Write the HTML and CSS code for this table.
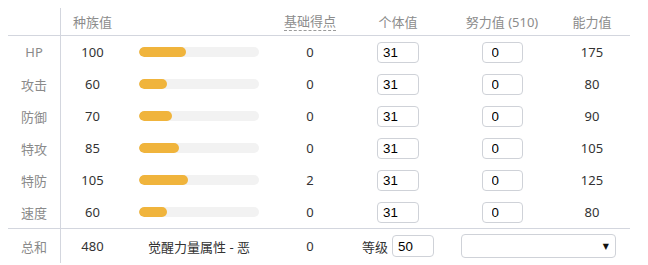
FILE: index.html
```html
<!DOCTYPE html>
<html lang="zh">
<head>
<meta charset="utf-8">
<link rel="stylesheet" href="styles.css">
</head>
<body>
<div class="stats">
  <div class="row head">
    <div class="cell label"></div>
    <div class="cell">种族值</div>
    <div class="cell"></div>
    <div class="cell"><span class="abbr">基础得点</span></div>
    <div class="cell">个体值</div>
    <div class="cell">努力值 (510)</div>
    <div class="cell">能力值</div>
  </div>

  <div class="row">
    <div class="cell label">HP</div>
    <div class="cell val">100</div>
    <div class="cell barcell"><div class="bar"><div class="fill" style="width:47px"></div></div></div>
    <div class="cell val">0</div>
    <div class="cell"><input class="inp iv" value="31"></div>
    <div class="cell"><input class="inp ev" value="0"></div>
    <div class="cell val">175</div>
  </div>
  <div class="row">
    <div class="cell label">攻击</div>
    <div class="cell val">60</div>
    <div class="cell barcell"><div class="bar"><div class="fill" style="width:28px"></div></div></div>
    <div class="cell val">0</div>
    <div class="cell"><input class="inp iv" value="31"></div>
    <div class="cell"><input class="inp ev" value="0"></div>
    <div class="cell val">80</div>
  </div>
  <div class="row">
    <div class="cell label">防御</div>
    <div class="cell val">70</div>
    <div class="cell barcell"><div class="bar"><div class="fill" style="width:33px"></div></div></div>
    <div class="cell val">0</div>
    <div class="cell"><input class="inp iv" value="31"></div>
    <div class="cell"><input class="inp ev" value="0"></div>
    <div class="cell val">90</div>
  </div>
  <div class="row">
    <div class="cell label">特攻</div>
    <div class="cell val">85</div>
    <div class="cell barcell"><div class="bar"><div class="fill" style="width:40px"></div></div></div>
    <div class="cell val">0</div>
    <div class="cell"><input class="inp iv" value="31"></div>
    <div class="cell"><input class="inp ev" value="0"></div>
    <div class="cell val">105</div>
  </div>
  <div class="row">
    <div class="cell label">特防</div>
    <div class="cell val">105</div>
    <div class="cell barcell"><div class="bar"><div class="fill" style="width:49px"></div></div></div>
    <div class="cell val">2</div>
    <div class="cell"><input class="inp iv" value="31"></div>
    <div class="cell"><input class="inp ev" value="0"></div>
    <div class="cell val">125</div>
  </div>
  <div class="row">
    <div class="cell label">速度</div>
    <div class="cell val">60</div>
    <div class="cell barcell"><div class="bar"><div class="fill" style="width:28px"></div></div></div>
    <div class="cell val">0</div>
    <div class="cell"><input class="inp iv" value="31"></div>
    <div class="cell"><input class="inp ev" value="0"></div>
    <div class="cell val">80</div>
  </div>

  <div class="row total">
    <div class="cell label">总和</div>
    <div class="cell val">480</div>
    <div class="cell val">觉醒力量属性 - 恶</div>
    <div class="cell val">0</div>
    <div class="cell level"><span class="lvl-label">等级</span><input class="inp lvl" value="50"></div>
    <div class="cell span2"><div class="select"><span class="arrow">▼</span></div></div>
  </div>
</div>
</body>
</html>
```

FILE: styles.css
```css
* { box-sizing: border-box; }

body {
  margin: 8px;
  background: #ffffff;
  font-family: "Noto Sans", "Noto Sans CJK SC", sans-serif;
  font-size: 13px;
  color: #333333;
}

.stats {
  width: 622px;
}

.row {
  display: grid;
  grid-template-columns: 53px 63px 150px 72px 104px 104px 76px;
  height: 32px;
}

.row.head {
  height: 28px;
  border-bottom: 1px solid #d3d6de;
  color: #8c8c8c;
}

.row.total {
  height: 35px;
  border-top: 1px solid #d3d6de;
}

.cell {
  display: flex;
  align-items: center;
  justify-content: center;
  white-space: nowrap;
}

.cell.label {
  border-right: 1px solid #d3d6de;
  color: #8a8a8a;
}

.val {
  color: #333333;
}

.abbr {
  display: inline-block;
  line-height: 17px;
  border-bottom: 1px dashed #9a9a9a;
}

.barcell {
  justify-content: flex-start;
  padding-left: 15px;
}

.bar {
  width: 120px;
  height: 10px;
  border-radius: 5px;
  background: #f2f2f2;
  overflow: hidden;
}

.fill {
  height: 10px;
  border-radius: 5px;
  background: #f0b43c;
}

.inp {
  width: 42px;
  height: 21px;
  border: 1px solid #cfd2d8;
  border-radius: 4px;
  padding: 0 0 0 5px;
  font-family: "Liberation Sans", Arial, sans-serif;
  font-size: 13.33px;
  color: #000000;
  background: #ffffff;
  outline: none;
}

.inp.ev {
  width: 41px;
  padding-left: 9px;
}

.level {
  gap: 4px;
}

.lvl-label {
  color: #333333;
}

.inp.lvl {
  height: 22px;
}

.span2 {
  grid-column: span 2;
  justify-content: flex-start;
  padding-left: 11px;
}

.select {
  width: 155px;
  height: 24px;
  border: 1px solid #cfd2d8;
  border-radius: 4px;
  display: flex;
  align-items: center;
  justify-content: flex-end;
  padding-right: 6px;
}

.arrow {
  font-family: "DejaVu Sans", sans-serif;
  font-size: 8px;
  color: #111111;
}
```
